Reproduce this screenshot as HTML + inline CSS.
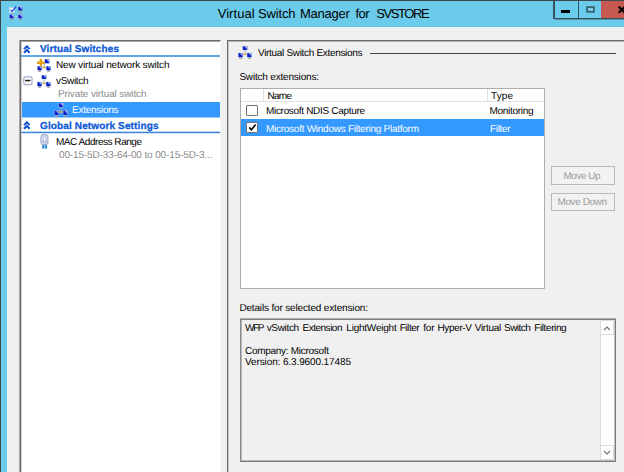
<!DOCTYPE html>
<html><head><meta charset="utf-8"><title>Virtual Switch Manager for SVSTORE</title>
<style>
html,body{margin:0;padding:0}
body{width:624px;height:472px;overflow:hidden;position:relative;background:#6bcbeb;font-family:"Liberation Sans",sans-serif}
div,span,svg{position:absolute;box-sizing:border-box}
.t{white-space:pre;line-height:14px;height:14px;text-rendering:geometricPrecision}
#frameT{left:0;top:0;width:624px;height:1px;background:#3c4a50}
#frameL{left:0;top:0;width:1px;height:472px;background:#3c4a50}
#client{left:7px;top:26px;width:617px;height:446px;background:#f0f0f0;border-top:1px solid #62bee2}
#btns{left:553px;top:1px;width:71px;height:18px;border-left:2px solid #37525e;border-bottom:1px solid #37525e}
#btnsh{left:555px;top:19px;width:69px;height:1px;background:#558fa5}
#bsep{left:578px;top:1px;width:1px;height:17px;background:#37525e}
#bclose{left:601px;top:1px;width:23px;height:17px;background:#c75850}
#gmin{left:561px;top:10px;width:9px;height:3px;background:#000}

#left{left:20px;top:40px;width:201px;height:440px;background:#fff;border:1px solid #6c6c6c;border-right:1px solid #f7f7f7}
#lefti{left:21px;top:41px;width:199px;height:440px;border-top:1px solid #a4a4a4;border-left:1px solid #d0d0d0}
#lefto{left:19px;top:40px;width:1px;height:440px;background:#a6a6a6}
#right{left:227px;top:40px;width:400px;height:440px;border-top:1px solid #6c6c6c;border-left:1px solid #6c6c6c}
#righti{left:228px;top:41px;width:400px;height:440px;border-top:1px solid #b4b4b4;border-left:1px solid #c4c4c4}
#hl1{left:21px;top:55px;width:199px;height:2px;background:#62a4e4}
#hl3{left:21px;top:131px;width:199px;height:3px;background:#3a84da;border-top:1px solid #c0d8f4;border-bottom:1px solid #d4e4f8}
#sel{left:22px;top:102px;width:198px;height:16px;background:#3399ff;border-bottom:1px solid #99ccff}
#secline{left:370px;top:53px;width:246px;height:1px;background:#444}
#list{left:240px;top:88px;width:305px;height:201px;background:#fff;border:1px solid #adadad}
#lhead{left:241px;top:89px;width:303px;height:13px;background:#fff;border-bottom:1px solid #e0e0e0}
#cd1{left:263px;top:89px;width:1px;height:12px;background:#dcdcdc}
#cd2{left:487px;top:89px;width:1px;height:12px;background:#dcdcdc}
#lsel{left:241px;top:119px;width:303px;height:17px;background:#3399ff}
.cb{width:12px;height:11px;background:#fff;border:1px solid #747474;border-radius:1px}
#cb1{left:246px;top:105px}
#cb2{left:246px;top:122px}
.btn{width:64px;height:18px;border:1px solid #b9b9b9;background:#f2f2f2}
#mu{left:551px;top:166px;height:19px}
#md{left:551px;top:193px}
#det{left:240px;top:318px;width:376px;height:144px;border:1px solid #7a7a7a;border-top-color:#b0b0b0;border-left-color:#8a8a8a;background:#f0f0f0}
#deti{left:241px;top:319px;width:374px;height:142px;border-top:1px solid #7c7c7c;border-left:1px solid #b4b4b4;border-bottom:1px solid #b8b8b8}
#sb{left:600px;top:320px;width:15px;height:140px;background:#fff;border:1px solid #dcdcdc;border-right-color:#c4c4c4}
#sbu{left:600px;top:320px;width:14px;height:15px;background:#fff;border:1px solid #dcdcdc}
#sbd{left:600px;top:445px;width:14px;height:15px;background:#fff;border:1px solid #dadada}
#h1,#h2{-webkit-text-stroke:0.3px #0f5ad6}
#title{left:0;top:6.80px;font-size:13px;font-weight:normal;color:#000}
#title_0{left:217.7px;top:0;letter-spacing:0.046px}
#title_1{left:258.1px;top:0;letter-spacing:-0.159px}
#title_2{left:300px;top:0;letter-spacing:-0.252px}
#title_3{left:355.6px;top:0;letter-spacing:-0.586px}
#title_4{left:376.2px;top:0;letter-spacing:-1.400px}
#h1{left:40px;top:43.33px;font-size:10px;font-weight:bold;color:#0f5ad6;letter-spacing:0.128px}
#t1{left:56px;top:58.53px;font-size:10px;font-weight:normal;color:#000;letter-spacing:-0.172px}
#t2{left:56px;top:74.83px;font-size:10px;font-weight:normal;color:#000;letter-spacing:-0.326px}
#t3{left:58px;top:87.53px;font-size:10px;font-weight:normal;color:#8a8a8a;letter-spacing:-0.126px}
#t4{left:72px;top:103.94px;font-size:10px;font-weight:normal;color:#fff;letter-spacing:-0.269px}
#h2{left:40px;top:119.73px;font-size:10px;font-weight:bold;color:#0f5ad6;letter-spacing:0.133px}
#t5{left:56px;top:136.34px;font-size:10px;font-weight:normal;color:#000;letter-spacing:-0.462px}
#t6{left:59px;top:148.84px;font-size:10px;font-weight:normal;color:#8a8a8a;letter-spacing:-0.133px}
#r0{left:258px;top:46.53px;font-size:10px;font-weight:normal;color:#000;letter-spacing:-0.316px}
#r1{left:239.4px;top:70.53px;font-size:10px;font-weight:normal;color:#000;letter-spacing:-0.190px}
#c1{left:267.5px;top:89.53px;font-size:10px;font-weight:normal;color:#000;letter-spacing:-0.729px}
#c2{left:491px;top:89.53px;font-size:10px;font-weight:normal;color:#000;letter-spacing:0.104px}
#l1{left:266px;top:104.53px;font-size:10px;font-weight:normal;color:#000;letter-spacing:-0.314px}
#l2{left:489.5px;top:104.53px;font-size:10px;font-weight:normal;color:#000;letter-spacing:-0.300px}
#l3{left:266px;top:122.54px;font-size:10px;font-weight:normal;color:#fff;letter-spacing:-0.265px}
#l4{left:490px;top:122.54px;font-size:10px;font-weight:normal;color:#fff;letter-spacing:-0.347px}
#b1{left:563.5px;top:169.53px;font-size:10px;font-weight:normal;color:#9a9a9a;letter-spacing:-0.503px}
#b2{left:557.5px;top:196.13px;font-size:10px;font-weight:normal;color:#9a9a9a;letter-spacing:-0.414px}
#d0{left:239.4px;top:301.53px;font-size:10px;font-weight:normal;color:#000;letter-spacing:-0.160px}
#d1{left:0;top:321.53px;font-size:10px;font-weight:normal;color:#000}
#d1_0{left:245px;top:0;letter-spacing:-1.400px}
#d1_1{left:266.7px;top:0;letter-spacing:-0.326px}
#d1_2{left:302.5px;top:0;letter-spacing:-0.490px}
#d1_3{left:346.3px;top:0;letter-spacing:-0.224px}
#d1_4{left:399.7px;top:0;letter-spacing:-0.447px}
#d1_5{left:423.3px;top:0;letter-spacing:-0.236px}
#d1_6{left:437.5px;top:0;letter-spacing:-0.365px}
#d1_7{left:474.7px;top:0;letter-spacing:-0.262px}
#d1_8{left:504px;top:0;letter-spacing:-0.531px}
#d1_9{left:534.2px;top:0;letter-spacing:-0.385px}
#d2{left:245px;top:344.53px;font-size:10px;font-weight:normal;color:#000;letter-spacing:-0.290px}
#d3{left:245px;top:355.53px;font-size:10px;font-weight:normal;color:#000;letter-spacing:-0.111px}
</style></head><body>
<div id="frameT"></div><div id="frameL"></div>
<span class="t" id="title"><span class="t" id="title_0">Virtual</span> <span class="t" id="title_1">Switch</span> <span class="t" id="title_2">Manager</span> <span class="t" id="title_3">for</span> <span class="t" id="title_4">SVSTORE</span></span><svg style="left:9px;top:5.9px" width="15" height="15" viewBox="0 0 15 15"><rect x="5" y="10.2" width="4.5" height="0.8" fill="#b9c4c8"/><rect x="11" y="5.5" width="0.8" height="3" fill="#b9a070"/><rect x="0.4" y="1.7" width="5" height="4.8" fill="#fff" stroke="#c4d0e4" stroke-width="0.8"/><path d="M1.5 3.9L3 5.5L7.2 0.5" fill="none" stroke="#1a4fd0" stroke-width="1.2"/><rect x="8.80" y="0.40" width="5.00" height="4.60" fill="#c4cfe6"/><rect x="9.20" y="0.80" width="4.20" height="3.80" fill="#0b22c8"/><path d="M10.46 0.80H13.40V3.65Z" fill="#a9bcec"/><rect x="10.00" y="5.50" width="2.6" height="0.8" fill="#8a8f9c"/><rect x="10.80" y="4.90" width="1" height="0.7" fill="#c89a3a"/><rect x="0.20" y="8.20" width="5.00" height="4.60" fill="#c4cfe6"/><rect x="0.60" y="8.60" width="4.20" height="3.80" fill="#0b22c8"/><path d="M1.86 8.60H4.80V11.45Z" fill="#a9bcec"/><rect x="1.40" y="13.30" width="2.6" height="0.8" fill="#8a8f9c"/><rect x="2.20" y="12.70" width="1" height="0.7" fill="#c89a3a"/><rect x="8.80" y="8.20" width="5.00" height="4.60" fill="#c4cfe6"/><rect x="9.20" y="8.60" width="4.20" height="3.80" fill="#0b22c8"/><path d="M10.46 8.60H13.40V11.45Z" fill="#a9bcec"/><rect x="10.00" y="13.30" width="2.6" height="0.8" fill="#8a8f9c"/><rect x="10.80" y="12.70" width="1" height="0.7" fill="#c89a3a"/></svg>
<div id="btns"></div><div id="btnsh"></div><div id="bsep"></div><div id="bclose"></div><div id="gmin"></div><svg id="gmax" style="left:585px;top:5px" width="11" height="9" viewBox="0 0 11 9"><rect x="2.15" y="2.15" width="6.7" height="4.6" fill="#8ed6ee" stroke="#386474" stroke-width="1.9"/></svg><svg style="left:618px;top:6px" width="8" height="8" viewBox="0 0 8 8"><path d="M0.6 0.6L6.9 6.9M6.9 0.6L0.6 6.9" fill="none" stroke="#000" stroke-width="2"/></svg>
<div id="client"></div>
<div id="left"></div><div id="lefti"></div><div id="lefto"></div>
<div id="hl1"></div><div id="sel"></div><div id="hl3"></div>
<svg style="left:23.2px;top:44.8px" width="8" height="9" viewBox="0 0 8 9"><path d="M1 4.1L3.8 1.3L6.6 4.1M1 7.8L3.8 5L6.6 7.8" fill="none" stroke="#1252cc" stroke-width="2"/></svg><svg style="left:23.2px;top:120.6px" width="8" height="9" viewBox="0 0 8 9"><path d="M1 4.1L3.8 1.3L6.6 4.1M1 7.8L3.8 5L6.6 7.8" fill="none" stroke="#1252cc" stroke-width="2"/></svg><svg style="left:37px;top:58.8px" width="14" height="14" viewBox="0 0 14 14"><rect x="6.8" y="4.2" width="1" height="3.4" fill="#9aa4b8"/><rect x="4.6" y="8.2" width="5" height="0.9" fill="#9aa4b8"/><rect x="7.50" y="-0.20" width="5.10" height="4.80" fill="#c4cfe6"/><rect x="7.90" y="0.20" width="4.30" height="4.00" fill="#0b22c8"/><path d="M9.19 0.20H12.20V3.20Z" fill="#a9bcec"/><rect x="0.20" y="6.90" width="4.90" height="4.80" fill="#c4cfe6"/><rect x="0.60" y="7.30" width="4.10" height="4.00" fill="#0b22c8"/><path d="M1.83 7.30H4.70V10.30Z" fill="#a9bcec"/><rect x="1.35" y="12.20" width="2.6" height="0.8" fill="#8a8f9c"/><rect x="2.15" y="11.60" width="1" height="0.7" fill="#c89a3a"/><rect x="9.00" y="6.90" width="5.00" height="4.80" fill="#c4cfe6"/><rect x="9.40" y="7.30" width="4.20" height="4.00" fill="#0b22c8"/><path d="M10.66 7.30H13.60V10.30Z" fill="#a9bcec"/><rect x="10.20" y="12.20" width="2.6" height="0.8" fill="#8a8f9c"/><rect x="11.00" y="11.60" width="1" height="0.7" fill="#c89a3a"/><rect x="5.8" y="7.6" width="2.6" height="1.5" fill="#eaa81a"/><path d="M2.6 0H5.1V2.4H7.6V4.9H5.1V7.3H2.6V4.9H0V2.4H2.6Z" fill="#e0a212"/></svg><svg style="left:37px;top:74.6px" width="14" height="14" viewBox="0 0 14 14" preserveAspectRatio="none"><rect x="6.6" y="4.2" width="1" height="3.4" fill="#9aa4b8"/><rect x="4.6" y="8.2" width="5" height="0.9" fill="#9aa4b8"/><rect x="4.40" y="-0.10" width="5.20" height="4.40" fill="#c4cfe6"/><rect x="4.80" y="0.30" width="4.40" height="3.60" fill="#0b22c8"/><path d="M6.12 0.30H9.20V3.00Z" fill="#a9bcec"/><rect x="0.10" y="6.60" width="5.00" height="5.00" fill="#c4cfe6"/><rect x="0.50" y="7.00" width="4.20" height="4.20" fill="#0b22c8"/><path d="M1.76 7.00H4.70V10.15Z" fill="#a9bcec"/><rect x="1.30" y="12.10" width="2.6" height="0.8" fill="#8a8f9c"/><rect x="2.10" y="11.50" width="1" height="0.7" fill="#c89a3a"/><rect x="8.90" y="6.60" width="5.00" height="5.00" fill="#c4cfe6"/><rect x="9.30" y="7.00" width="4.20" height="4.20" fill="#0b22c8"/><path d="M10.56 7.00H13.50V10.15Z" fill="#a9bcec"/><rect x="10.10" y="12.10" width="2.6" height="0.8" fill="#8a8f9c"/><rect x="10.90" y="11.50" width="1" height="0.7" fill="#c89a3a"/><rect x="6" y="7.4" width="2.2" height="1.7" rx="0.5" fill="#eaa81a"/></svg><svg style="left:53.7px;top:103px" width="14" height="15" viewBox="0 0 14 14" preserveAspectRatio="none"><rect x="6.6" y="4.2" width="1" height="3.4" fill="#9aa4b8"/><rect x="4.6" y="8.2" width="5" height="0.9" fill="#9aa4b8"/><rect x="4.40" y="-0.10" width="5.20" height="4.40" fill="#c4cfe6"/><rect x="4.80" y="0.30" width="4.40" height="3.60" fill="#0b22c8"/><path d="M6.12 0.30H9.20V3.00Z" fill="#a9bcec"/><rect x="0.10" y="6.60" width="5.00" height="5.00" fill="#c4cfe6"/><rect x="0.50" y="7.00" width="4.20" height="4.20" fill="#0b22c8"/><path d="M1.76 7.00H4.70V10.15Z" fill="#a9bcec"/><rect x="1.30" y="12.10" width="2.6" height="0.8" fill="#8a8f9c"/><rect x="2.10" y="11.50" width="1" height="0.7" fill="#c89a3a"/><rect x="8.90" y="6.60" width="5.00" height="5.00" fill="#c4cfe6"/><rect x="9.30" y="7.00" width="4.20" height="4.20" fill="#0b22c8"/><path d="M10.56 7.00H13.50V10.15Z" fill="#a9bcec"/><rect x="10.10" y="12.10" width="2.6" height="0.8" fill="#8a8f9c"/><rect x="10.90" y="11.50" width="1" height="0.7" fill="#c89a3a"/><rect x="6" y="7.4" width="2.2" height="1.7" rx="0.5" fill="#eaa81a"/></svg><svg style="left:39.5px;top:134.2px" width="10" height="16" viewBox="0 0 10 16"><rect x="2.3" y="10.3" width="2" height="4.3" fill="#1f88e0"/><rect x="4.9" y="10.3" width="2" height="4.3" fill="#1f88e0"/><rect x="0.9" y="0.6" width="7.1" height="10" rx="2" fill="#ccd4e8" stroke="#9aa6c6" stroke-width="0.9"/><path d="M2.2 7.2Q4.6 9.4 7 7.2" fill="none" stroke="#8e9abc" stroke-width="0.7"/><rect x="3.5" y="3.6" width="2.2" height="4" rx="0.6" fill="#fbfcfe" stroke="#a8b2cc" stroke-width="0.5"/></svg><svg id="minus" style="left:23px;top:76px" width="10" height="10" viewBox="0 0 10 10"><rect x="0.8" y="0.8" width="8.2" height="7.8" rx="1.3" fill="#fff" stroke="#a2aed2" stroke-width="1.2"/><rect x="1.9" y="5.3" width="6" height="2.2" fill="#f5efe6"/><rect x="2.2" y="3.8" width="5.2" height="1.4" fill="#111"/></svg><span class="t" id="h1">Virtual Switches</span><span class="t" id="t1">New virtual network switch</span><span class="t" id="t2">vSwitch</span><span class="t" id="t3">Private virtual switch</span><span class="t" id="t4">Extensions</span><span class="t" id="h2">Global Network Settings</span><span class="t" id="t5">MAC Address Range</span><span class="t" id="t6">00-15-5D-33-64-00 to 00-15-5D-3...</span>
<div id="right"></div><div id="righti"></div>
<svg style="left:238px;top:46px" width="14" height="14" viewBox="0 0 14 14" preserveAspectRatio="none"><rect x="6.6" y="4.2" width="1" height="3.4" fill="#9aa4b8"/><rect x="4.6" y="8.2" width="5" height="0.9" fill="#9aa4b8"/><rect x="4.40" y="-0.10" width="5.20" height="4.40" fill="#c4cfe6"/><rect x="4.80" y="0.30" width="4.40" height="3.60" fill="#0b22c8"/><path d="M6.12 0.30H9.20V3.00Z" fill="#a9bcec"/><rect x="0.10" y="6.60" width="5.00" height="5.00" fill="#c4cfe6"/><rect x="0.50" y="7.00" width="4.20" height="4.20" fill="#0b22c8"/><path d="M1.76 7.00H4.70V10.15Z" fill="#a9bcec"/><rect x="1.30" y="12.10" width="2.6" height="0.8" fill="#8a8f9c"/><rect x="2.10" y="11.50" width="1" height="0.7" fill="#c89a3a"/><rect x="8.90" y="6.60" width="5.00" height="5.00" fill="#c4cfe6"/><rect x="9.30" y="7.00" width="4.20" height="4.20" fill="#0b22c8"/><path d="M10.56 7.00H13.50V10.15Z" fill="#a9bcec"/><rect x="10.10" y="12.10" width="2.6" height="0.8" fill="#8a8f9c"/><rect x="10.90" y="11.50" width="1" height="0.7" fill="#c89a3a"/><rect x="6" y="7.4" width="2.2" height="1.7" rx="0.5" fill="#eaa81a"/></svg><span class="t" id="r0">Virtual Switch Extensions</span><div id="secline"></div>
<span class="t" id="r1">Switch extensions:</span>
<div id="list"></div><div id="lhead"></div><div id="cd1"></div><div id="cd2"></div>
<span class="t" id="c1">Name</span><span class="t" id="c2">Type</span>
<div id="lsel"></div>
<div class="cb" id="cb1"></div><div class="cb" id="cb2"></div><svg style="left:246.7px;top:122px" width="11" height="11" viewBox="0 0 11 11"><path d="M2.3 5.4L4.4 7.8L8.6 2.6" fill="none" stroke="#000" stroke-width="1.6"/></svg>
<span class="t" id="l1">Microsoft NDIS Capture</span><span class="t" id="l2">Monitoring</span><span class="t" id="l3">Microsoft Windows Filtering Platform</span><span class="t" id="l4">Filter</span>
<div class="btn" id="mu"></div><div class="btn" id="md"></div>
<span class="t" id="b1">Move Up</span><span class="t" id="b2">Move Down</span>
<span class="t" id="d0">Details for selected extension:</span>
<div id="det"></div><div id="deti"></div><div id="sb"></div><div id="sbu"></div><div id="sbd"></div><svg style="left:602.6px;top:324.9px" width="8" height="7" viewBox="0 0 8 7"><path d="M1 5L4 2L7 5" fill="none" stroke="#707070" stroke-width="1.1"/></svg><svg style="left:602.6px;top:449.1px" width="8" height="7" viewBox="0 0 8 7"><path d="M1 2L4 5L7 2" fill="none" stroke="#707070" stroke-width="1.1"/></svg>
<span class="t" id="d1"><span class="t" id="d1_0">WFP</span> <span class="t" id="d1_1">vSwitch</span> <span class="t" id="d1_2">Extension</span> <span class="t" id="d1_3">LightWeight</span> <span class="t" id="d1_4">Filter</span> <span class="t" id="d1_5">for</span> <span class="t" id="d1_6">Hyper-V</span> <span class="t" id="d1_7">Virtual</span> <span class="t" id="d1_8">Switch</span> <span class="t" id="d1_9">Filtering</span></span><span class="t" id="d2">Company: Microsoft</span><span class="t" id="d3">Version: 6.3.9600.17485</span>
</body></html>
